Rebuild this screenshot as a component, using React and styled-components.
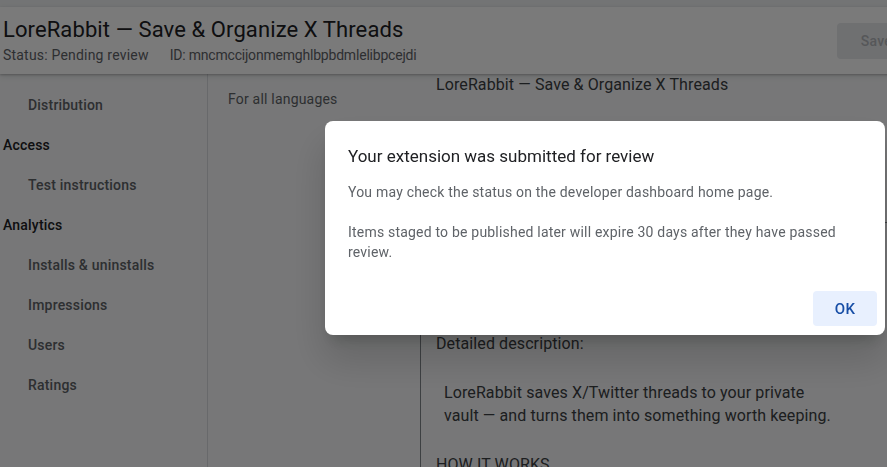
import React from 'react';
import styled, { createGlobalStyle } from 'styled-components';

const navItems = [
  { label: 'Distribution', sub: true },
  { label: 'Access' },
  { label: 'Test instructions', sub: true },
  { label: 'Analytics' },
  { label: 'Installs & uninstalls', sub: true },
  { label: 'Impressions', sub: true },
  { label: 'Users', sub: true },
  { label: 'Ratings', sub: true },
];

const App = () => {
  return (
    <>
      <GlobalStyle />
      <Page>
        <TopStrip />
        <Header>
          <TitleBlock>
            <Title>LoreRabbit — Save &amp; Organize X Threads</Title>
            <Meta>
              <MetaItem $spacing="0.2px">Status: Pending review</MetaItem>
              <MetaItem $spacing="-0.2px">ID: mncmccijonmemghlbpbdmlelibpcejdi</MetaItem>
            </Meta>
          </TitleBlock>
          <SaveButton disabled>Save</SaveButton>
        </Header>
        <Body>
          <Sidebar>
            {navItems.map((item, idx) => (
              <NavItem key={idx} $sub={item.sub}>
                {item.label}
              </NavItem>
            ))}
          </Sidebar>
          <Main>
            <LabelCol>For all languages</LabelCol>
            <Preview>
              <PreviewTitle>LoreRabbit — Save &amp; Organize X Threads</PreviewTitle>
              <DescBox>
                <Line $gap>Detailed description:</Line>
                <Line />
                <Para>
                  <Line>LoreRabbit saves X/Twitter threads to your private</Line>
                  <Line>vault — and turns them into something worth keeping.</Line>
                </Para>
                <Line />
                <Line>HOW IT WORKS</Line>
              </DescBox>
            </Preview>
          </Main>
        </Body>
      </Page>
      <Scrim />
      <Dialog role="dialog">
        <DialogContent>
          <DialogTitle>Your extension was submitted for review</DialogTitle>
          <DialogText>You may check the status on the developer dashboard home page.</DialogText>
          <DialogText>
            Items staged to be published later will expire 30 days after they have passed review.
          </DialogText>
        </DialogContent>
        <DialogActions>
          <OkButton>OK</OkButton>
        </DialogActions>
      </Dialog>
    </>
  );
};

export default App;

const GlobalStyle = createGlobalStyle`
  html, body {
    margin: 0;
    padding: 0;
    height: 100%;
    overflow: hidden;
    background: #f8f9fa;
  }
  body {
    font-family: Roboto, "Liberation Sans", sans-serif;
    -webkit-font-smoothing: antialiased;
  }
`;

const Page = styled.div`
  width: 940px;
  height: 100vh;
  display: flex;
  flex-direction: column;
  background: #f8f9fa;
`;

const TopStrip = styled.div`
  height: 7px;
  background: #f1f3f4;
`;

const Header = styled.header`
  position: relative;
  z-index: 1;
  height: 67px;
  box-sizing: border-box;
  padding: 9px 24px 0 3px;
  display: flex;
  justify-content: space-between;
  align-items: flex-start;
  background: #fff;
  box-shadow: 0 1px 2px rgba(60, 64, 67, 0.3), 0 2px 6px rgba(60, 64, 67, 0.15);
`;

const TitleBlock = styled.div`
  display: flex;
  flex-direction: column;
`;

const Title = styled.h1`
  margin: 0;
  font-size: 22px;
  line-height: 28px;
  font-weight: 400;
  letter-spacing: 0.1px;
  color: #202124;
`;

const Meta = styled.div`
  margin-top: 1px;
  display: flex;
  gap: 21px;
  font-size: 14px;
  line-height: 20px;
  color: #5f6368;
`;

const MetaItem = styled.span`
  letter-spacing: ${({ $spacing }) => $spacing};
`;

const SaveButton = styled.button`
  margin-top: 7px;
  height: 36px;
  padding: 0 24px;
  border: none;
  border-radius: 4px;
  background: #e8eaed;
  color: #b4b7bb;
  font-family: inherit;
  font-size: 14px;
  font-weight: 500;
  letter-spacing: 0.25px;
`;

const Body = styled.div`
  flex: 1;
  display: grid;
  grid-template-columns: 208px 1fr;
  min-height: 0;
`;

const Sidebar = styled.nav`
  padding-top: 11px;
  border-right: 1px solid #dadce0;
  display: flex;
  flex-direction: column;
`;

const NavItem = styled.div`
  height: 40px;
  display: flex;
  align-items: center;
  padding-left: ${({ $sub }) => ($sub ? '28px' : '3px')};
  font-size: 14px;
  font-weight: 500;
  letter-spacing: 0.2px;
  color: ${({ $sub }) => ($sub ? '#5f6368' : '#202124')};
`;

const Main = styled.main`
  display: grid;
  grid-template-columns: 212px 1fr;
  align-items: start;
`;

const LabelCol = styled.div`
  padding: 15px 20px;
  font-size: 14px;
  line-height: 20px;
  letter-spacing: 0.2px;
  color: #5f6368;
`;

const Preview = styled.section`
  padding-top: 1px;
`;

const PreviewTitle = styled.div`
  padding-left: 16px;
  font-size: 16px;
  line-height: 20px;
  letter-spacing: 0.1px;
  color: #3c4043;
`;

const DescBox = styled.div`
  margin-top: 127px;
  padding: 109px 16px 0 15px;
  border-top: 1px solid #80868b;
  border-left: 1px solid #80868b;
  font-size: 16px;
  line-height: 23px;
  letter-spacing: 0.1px;
  color: #3c4043;
`;

const Line = styled.div`
  min-height: 23px;
  white-space: nowrap;
  margin-bottom: ${({ $gap }) => ($gap ? '3px' : '0')};
`;

const Para = styled.div`
  padding-left: 8px;
  margin-bottom: 3px;
`;

const Scrim = styled.div`
  position: fixed;
  inset: 0;
  background: rgba(0, 0, 0, 0.52);
  z-index: 10;
`;

const Dialog = styled.div`
  position: fixed;
  left: 325px;
  top: 121px;
  width: 560px;
  z-index: 11;
  background: #fff;
  border-radius: 8px;
  box-shadow: 0 11px 15px -7px rgba(0, 0, 0, 0.2), 0 24px 38px 3px rgba(0, 0, 0, 0.14);
`;

const DialogContent = styled.div`
  padding: 23px 24px 0 23px;
`;

const DialogTitle = styled.h2`
  margin: 0 0 14px;
  font-size: 17px;
  line-height: 24px;
  font-weight: 400;
  color: #202124;
`;

const DialogText = styled.p`
  margin: 0 0 20px;
  font-size: 14px;
  line-height: 20px;
  letter-spacing: 0.2px;
  color: #5f6368;
  &:last-child {
    margin-bottom: 0;
  }
`;

const DialogActions = styled.div`
  display: flex;
  justify-content: flex-end;
  padding: 29px 8px 9px;
`;

const OkButton = styled.button`
  width: 64px;
  height: 35px;
  border: none;
  border-radius: 4px;
  background: #e8f0fe;
  color: #174ea6;
  font-family: inherit;
  font-size: 15px;
  font-weight: 500;
  letter-spacing: 0.25px;
`;
